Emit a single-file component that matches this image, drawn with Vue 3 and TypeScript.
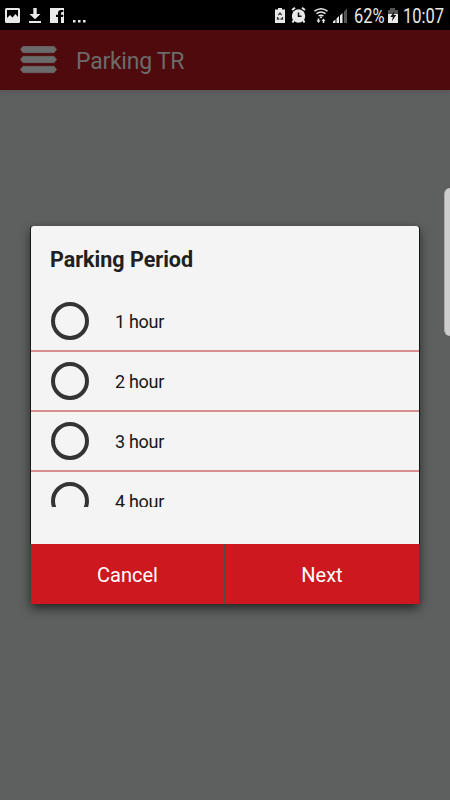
<script setup lang="ts">
const periods: string[] = ['1 hour', '2 hour', '3 hour', '4 hour']
</script>

<template>
  <div class="screen">
    <div class="status">
      <svg width="450" height="30" viewBox="0 0 450 30">
        <g fill="#e9e9e9">
          <path fill-rule="evenodd" d="M6.500 8h12q1.500 0 1.500 1.500v12q0 1.500-1.500 1.500h-12q-1.500 0-1.500-1.500v-12q0-1.500 1.500-1.500zM7 10v8l3-3 2.500 2.500 3-3.500 2.500 3v-7z" />
          <path d="M33.300 8h3.400v6h3.800L35 19.300 29.500 14h3.800zM29 21h12v2H29z" />
          <path fill-rule="evenodd" d="M50 8h14v15h-3v-6h2l.4-2.300H61v-1.500q0-1.200 1.300-1.200h1V10h-2.200Q58 10 58 13v1.700h-2V17h2v6h-8z" />
          <path d="M73 20h2.500v2.500H73zM78 20h2.500v2.500H78zM83 20h2.500v2.500H83z" />
          <path d="M278 8h4v1.500h3V23h-10V9.500h3z" />
          <circle cx="298.500" cy="16" r="6.700" />
          <path d="M292 10l3-2.300M302 7.700l3 2.300M294 20l-1.500 2.500M303 20l1.500 2.500" fill="none" stroke="#e9e9e9" stroke-width="2" />
        </g>
        <path d="M278.300 15.200l1.700-2.200 1.700 2.200M282.500 17v2h-2M279.300 19h-1.800v-2" fill="none" stroke="#333" stroke-width="1.300" />
        <path d="M298.500 12.500v3.800h3" fill="none" stroke="#111" stroke-width="1.500" />
        <g fill="none" stroke="#e9e9e9" stroke-width="1.500">
          <path d="M314.500 11.200q6.500-5 13 0M316.500 13.700q4.500-3.500 9 0M318.500 16q2.500-1.700 5 0" />
        </g>
        <path d="M321 16l1.200 1.200-1.200 1.200-1.200-1.200zM318.500 23l-2-2.500h1.200V18.500h1.600v2h1.200zM323.500 18.500l2 2.500h-1.200v2h-1.600v-2h-1.200z" fill="#e9e9e9" />
        <path d="M333 23v-1.500l2.500-2V23zM336.500 23v-4.500l2.500-2.500v7zM340 23v-7.500l2.500-2.500v10z" fill="#e9e9e9" />
        <path d="M344 23V11.500l3-3V23z" fill="#555" />
        <text x="354" y="23" textLength="30.500" lengthAdjust="spacingAndGlyphs">62%</text>
        <path d="M390 8h5v2h3v4H388v-4h2z" fill="#555" />
        <path d="M388 14h10v9h-10z" fill="#e9e9e9" />
        <path d="M394.500 11l-4.200 6h2.500l-1 4.500 4.400-6.500h-2.500z" fill="#111" />
        <text x="403" y="23" textLength="41" lengthAdjust="spacingAndGlyphs">10:07</text>
      </svg>
    </div>

    <header class="bar">
      <svg class="menu" width="37" height="28" viewBox="0 0 37 28">
        <path d="M3 .3h31l2.600 3.200L34 6.700H3L.4 3.500zM3 10.300h31l2.600 3.200-2.600 3.200H3L.4 13.500zM3 20.300h31l2.600 3.200-2.600 3.200H3L.4 23.500z" fill="#6b6b6b" stroke="#6b6b6b" stroke-width=".6" stroke-linejoin="round" />
      </svg>
      <span class="name">Parking TR</span>
    </header>

    <main class="content">
      <section class="dialog">
        <div class="panel">
          <h1>Parking Period</h1>
          <ul class="list">
            <li v-for="period in periods" :key="period">
              <span class="radio"></span>
              <span class="label">{{ period }}</span>
            </li>
          </ul>
        </div>
        <footer class="actions">
          <button type="button" class="cancel">Cancel</button>
          <button type="button" class="next">Next</button>
        </footer>
      </section>
    </main>
    <div class="edge"></div>
  </div>
</template>

<style>
body {
  margin: 0;
}
</style>

<style scoped>
.screen {
  position: relative;
  width: 450px;
  height: 800px;
  overflow: hidden;
  display: flex;
  flex-direction: column;
  background: #5e605f;
  font-family: Roboto, "Liberation Sans", sans-serif;
}
.status {
  height: 30px;
  flex: none;
  background: #000;
}
.status svg {
  display: block;
}
.status text {
  font-size: 19.5px;
  fill: #e9e9e9;
}
.bar {
  height: 60px;
  flex: none;
  display: flex;
  align-items: center;
  box-sizing: border-box;
  padding-left: 20px;
  background: #4f0a0d;
  box-shadow: 0 1px 6px rgba(0, 0, 0, 0.15);
}
.menu {
  margin-top: -1px;
}
.name {
  margin: 2px 0 0 19px;
  font-size: 23px;
  letter-spacing: -0.25px;
  color: #6b6b6b;
}
.content {
  flex: 1;
  padding: 136px 31px 0;
}
.dialog {
  height: 378px;
  display: flex;
  flex-direction: column;
  border-radius: 3px 3px 0 0;
  background: #f4f4f4;
  box-shadow: 0 4px 11px rgba(0, 0, 0, 0.65);
}
.panel {
  height: 318px;
  border-radius: 3px 3px 0 0;
  box-shadow: -1px 0 #151818, 1px 0 #151818;
  background: #f4f4f4;
}
h1 {
  margin: 0;
  height: 66px;
  box-sizing: border-box;
  padding: 19px 19px 0;
  font-size: 21.5px;
  line-height: 30px;
  font-weight: 700;
  color: #202020;
}
.list {
  margin: 0;
  padding: 0;
  height: 215px;
  overflow: hidden;
  list-style: none;
}
li {
  height: 60px;
  box-sizing: border-box;
  display: flex;
  align-items: center;
  padding-left: 20px;
  border-bottom: 2px solid #d88f90;
}
.radio {
  width: 38px;
  height: 38px;
  box-sizing: border-box;
  border: 4px solid #343434;
  border-radius: 50%;
}
.label {
  margin: 1px 0 0 26px;
  font-size: 18px;
  letter-spacing: -0.3px;
  color: #171717;
}
.actions {
  height: 60px;
  display: flex;
}
.actions button {
  border: 0;
  padding: 2px 0 0;
  background: #cc181e;
  color: #fff;
  font: 20px Roboto, "Liberation Sans", sans-serif;
}
.actions .cancel {
  width: 194px;
  border-right: 1px solid #54494a;
}
.actions .next {
  flex: 1;
}
.edge {
  position: absolute;
  top: 188px;
  right: 0;
  width: 6px;
  height: 148px;
  box-sizing: border-box;
  border-left: 1px solid #aaa;
  border-radius: 6px 0 0 6px;
  background: #cdcdcd;
}
</style>
